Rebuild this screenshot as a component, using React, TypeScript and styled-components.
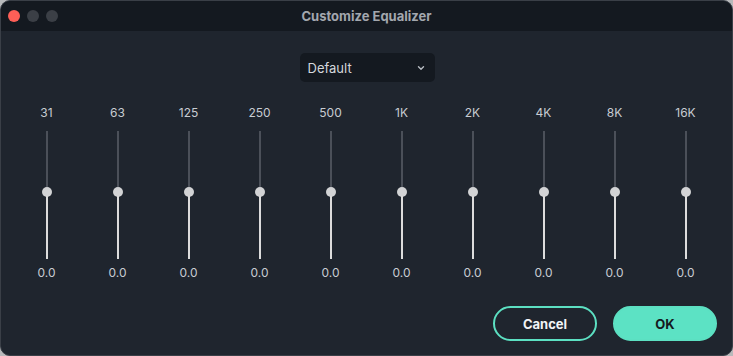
import styled, { createGlobalStyle } from "styled-components";

const Bands = ["31", "63", "125", "250", "500", "1K", "2K", "4K", "8K", "16K"];

const GlobalStyle = createGlobalStyle`
  html, body {
    margin: 0;
    padding: 0;
    background: #b8b9bb;
  }
  body {
    font-family: Inter, "Liberation Sans", Arial, sans-serif;
  }
`;

export default function App() {
  return (
    <>
      <GlobalStyle />
      <Window>
        <TitleBar>
          <Lights>
            <Light color="#fe5f57" />
            <Light color="#3b3f46" />
            <Light color="#3b3f46" />
          </Lights>
          <Title>Customize Equalizer</Title>
        </TitleBar>
        <Body>
          <PresetRow>
            <Select>
              <span>Default</span>
              <svg width="10" height="10" viewBox="0 0 10 10">
                <path
                  d="M2.5 3.8 L5 6.2 L7.5 3.8"
                  fill="none"
                  stroke="#b9bdc4"
                  strokeWidth="1.4"
                  strokeLinecap="round"
                  strokeLinejoin="round"
                />
              </svg>
            </Select>
          </PresetRow>
          <BandsRow>
            {Bands.map((band) => (
              <Band key={band}>
                <BandLabel>{band}</BandLabel>
                <Track>
                  <Upper />
                  <Knob />
                  <Lower />
                </Track>
                <BandValue>0.0</BandValue>
              </Band>
            ))}
          </BandsRow>
          <Footer>
            <Button>Cancel</Button>
            <Button primary>OK</Button>
          </Footer>
        </Body>
      </Window>
    </>
  );
}

const Window = styled.div`
  width: 733px;
  height: 356px;
  box-sizing: border-box;
  border-radius: 10px;
  border: 1px solid #3a3f47;
  background: #1f252e;
  overflow: hidden;
  display: flex;
  flex-direction: column;
`;

const TitleBar = styled.div`
  height: 30px;
  flex: none;
  background: #141920;
  display: flex;
  align-items: center;
  justify-content: center;
  position: relative;
`;

const Lights = styled.div`
  position: absolute;
  left: 7px;
  top: 9px;
  display: flex;
  gap: 7px;
`;

const Light = styled.div<{ color: string }>`
  width: 12px;
  height: 12px;
  border-radius: 50%;
  background: ${(p) => p.color};
`;

const Title = styled.div`
  color: #a3a7ae;
  font-size: 13px;
  font-weight: 700;
`;

const Body = styled.div`
  flex: 1;
  display: flex;
  flex-direction: column;
`;

const PresetRow = styled.div`
  display: flex;
  justify-content: center;
  padding-top: 22px;
  padding-left: 1px;
`;

const Select = styled.div`
  width: 135px;
  height: 29px;
  box-sizing: border-box;
  background: #141920;
  border-radius: 5px;
  display: flex;
  align-items: center;
  justify-content: space-between;
  padding: 0 9px 0 8px;
  color: #d4d7dc;
  font-size: 13px;
`;

const BandsRow = styled.div`
  display: flex;
  padding: 23px 0 0 10px;
`;

const Band = styled.div`
  width: 71px;
  display: flex;
  flex-direction: column;
  align-items: center;
`;

const BandLabel = styled.div`
  color: #c8ccd2;
  font-size: 12px;
  line-height: 16px;
  height: 16px;
`;

const Track = styled.div`
  margin-top: 10px;
  height: 128px;
  width: 10px;
  display: flex;
  flex-direction: column;
  align-items: center;
`;

const Upper = styled.div`
  width: 2px;
  height: 56px;
  background: #4b5059;
`;

const Knob = styled.div`
  width: 10px;
  height: 10px;
  border-radius: 50%;
  background: #d2d3d5;
  flex: none;
`;

const Lower = styled.div`
  width: 2px;
  flex: 1;
  background: #dcdcdc;
  margin-top: -1px;
`;

const BandValue = styled.div`
  margin-top: 6px;
  color: #c8ccd2;
  font-size: 12px;
  line-height: 16px;
`;

const Footer = styled.div`
  margin-top: auto;
  display: flex;
  justify-content: flex-end;
  gap: 16px;
  padding: 0 15px 14px 0;
`;

const Button = styled.button<{ primary?: boolean }>`
  width: 104px;
  height: 35px;
  box-sizing: border-box;
  border-radius: 18px;
  border: 2px solid #5ce0c2;
  background: ${(p) => (p.primary ? "#5ce2c4" : "transparent")};
  color: ${(p) => (p.primary ? "#151a20" : "#f2f4f6")};
  font-family: Inter, "Liberation Sans", Arial, sans-serif;
  font-size: 13px;
  font-weight: 700;
  cursor: pointer;
`;
